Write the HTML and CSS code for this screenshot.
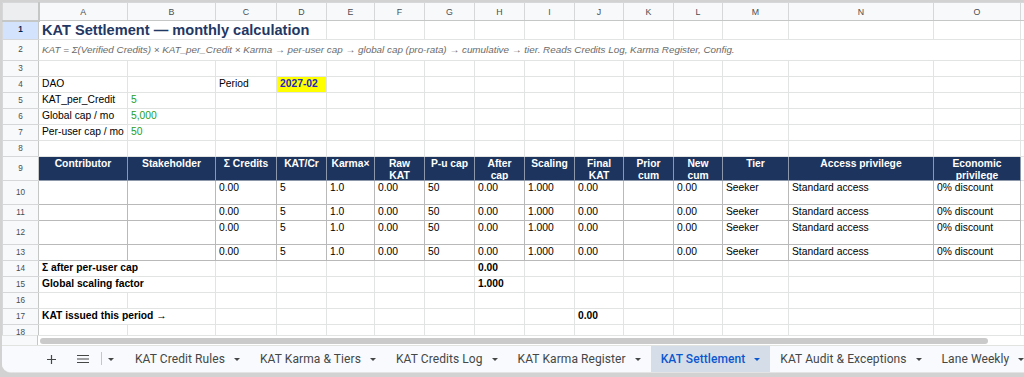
FILE: index.html
```html
<!DOCTYPE html>
<html>
<head>
<meta charset="utf-8">
<title>KAT Settlement</title>
<link rel="stylesheet" href="styles.css">
</head>
<body>
<div class="app">
  <div class="sheet">
    <table class="grid">
      <colgroup>
        <col class="c-rh"><col class="c-a"><col class="c-b"><col class="c-c"><col class="c-d"><col class="c-e"><col class="c-f"><col class="c-g"><col class="c-h"><col class="c-i"><col class="c-j"><col class="c-k"><col class="c-l"><col class="c-m"><col class="c-n"><col class="c-o"><col class="c-p">
      </colgroup>
      <tr class="r-colhdr">
        <th class="corner"></th><th>A</th><th>B</th><th>C</th><th>D</th><th>E</th><th>F</th><th>G</th><th>H</th><th>I</th><th>J</th><th>K</th><th>L</th><th>M</th><th>N</th><th>O</th><th></th>
      </tr>
      <tr class="r-1">
        <th class="rh rh-sel">1</th><td colspan="4" class="title">KAT Settlement — monthly calculation</td><td></td><td></td><td></td><td></td><td></td><td></td><td></td><td></td><td></td><td></td><td></td><td></td>
      </tr>
      <tr class="r-2">
        <th class="rh">2</th><td colspan="15" class="note">KAT = Σ(Verified Credits) × KAT_per_Credit × Karma → per-user cap → global cap (pro-rata) → cumulative → tier. Reads Credits Log, Karma Register, Config.</td><td></td>
      </tr>
      <tr class="r-s">
        <th class="rh">3</th><td></td><td></td><td></td><td></td><td></td><td></td><td></td><td></td><td></td><td></td><td></td><td></td><td></td><td></td><td></td><td></td>
      </tr>
      <tr class="r-s">
        <th class="rh">4</th><td>DAO</td><td></td><td>Period</td><td class="period">2027-02</td><td></td><td></td><td></td><td></td><td></td><td></td><td></td><td></td><td></td><td></td><td></td><td></td>
      </tr>
      <tr class="r-s">
        <th class="rh">5</th><td>KAT_per_Credit</td><td class="input">5</td><td></td><td></td><td></td><td></td><td></td><td></td><td></td><td></td><td></td><td></td><td></td><td></td><td></td><td></td>
      </tr>
      <tr class="r-s">
        <th class="rh">6</th><td>Global cap / mo</td><td class="input">5,000</td><td></td><td></td><td></td><td></td><td></td><td></td><td></td><td></td><td></td><td></td><td></td><td></td><td></td><td></td>
      </tr>
      <tr class="r-s">
        <th class="rh">7</th><td>Per-user cap / mo</td><td class="input">50</td><td></td><td></td><td></td><td></td><td></td><td></td><td></td><td></td><td></td><td></td><td></td><td></td><td></td><td></td>
      </tr>
      <tr class="r-s">
        <th class="rh">8</th><td></td><td></td><td></td><td></td><td></td><td></td><td></td><td></td><td></td><td></td><td></td><td></td><td></td><td></td><td></td><td></td>
      </tr>
      <tr class="r-l">
        <th class="rh">9</th>
        <td class="th"><div class="hw">Contributor</div></td>
        <td class="th"><div class="hw">Stakeholder</div></td>
        <td class="th"><div class="hw">Σ Credits</div></td>
        <td class="th"><div class="hw">KAT/Cr</div></td>
        <td class="th"><div class="hw">Karma×</div></td>
        <td class="th"><div class="hw">Raw<br>KAT</div></td>
        <td class="th"><div class="hw">P-u cap</div></td>
        <td class="th"><div class="hw">After<br>cap</div></td>
        <td class="th"><div class="hw">Scaling</div></td>
        <td class="th"><div class="hw">Final<br>KAT</div></td>
        <td class="th"><div class="hw">Prior<br>cum</div></td>
        <td class="th"><div class="hw">New<br>cum</div></td>
        <td class="th"><div class="hw">Tier</div></td>
        <td class="th"><div class="hw">Access privilege</div></td>
        <td class="th"><div class="hw">Economic<br>privilege</div></td>
        <td></td>
      </tr>
      <tr class="r-l">
        <th class="rh">10</th><td class="d"></td><td class="d"></td><td class="d">0.00</td><td class="d">5</td><td class="d">1.0</td><td class="d">0.00</td><td class="d">50</td><td class="d">0.00</td><td class="d">1.000</td><td class="d">0.00</td><td class="d"></td><td class="d">0.00</td><td class="d">Seeker</td><td class="d">Standard access</td><td class="d">0% discount</td><td></td>
      </tr>
      <tr class="r-s">
        <th class="rh">11</th><td class="d"></td><td class="d"></td><td class="d">0.00</td><td class="d">5</td><td class="d">1.0</td><td class="d">0.00</td><td class="d">50</td><td class="d">0.00</td><td class="d">1.000</td><td class="d">0.00</td><td class="d"></td><td class="d">0.00</td><td class="d">Seeker</td><td class="d">Standard access</td><td class="d">0% discount</td><td></td>
      </tr>
      <tr class="r-l">
        <th class="rh">12</th><td class="d"></td><td class="d"></td><td class="d">0.00</td><td class="d">5</td><td class="d">1.0</td><td class="d">0.00</td><td class="d">50</td><td class="d">0.00</td><td class="d">1.000</td><td class="d">0.00</td><td class="d"></td><td class="d">0.00</td><td class="d">Seeker</td><td class="d">Standard access</td><td class="d">0% discount</td><td></td>
      </tr>
      <tr class="r-s">
        <th class="rh">13</th><td class="d"></td><td class="d"></td><td class="d">0.00</td><td class="d">5</td><td class="d">1.0</td><td class="d">0.00</td><td class="d">50</td><td class="d">0.00</td><td class="d">1.000</td><td class="d">0.00</td><td class="d"></td><td class="d">0.00</td><td class="d">Seeker</td><td class="d">Standard access</td><td class="d">0% discount</td><td></td>
      </tr>
      <tr class="r-s">
        <th class="rh">14</th><td colspan="2" class="b">Σ after per-user cap</td><td></td><td></td><td></td><td></td><td></td><td class="b">0.00</td><td></td><td></td><td></td><td></td><td></td><td></td><td></td><td></td>
      </tr>
      <tr class="r-s">
        <th class="rh">15</th><td colspan="2" class="b">Global scaling factor</td><td></td><td></td><td></td><td></td><td></td><td class="b">1.000</td><td></td><td></td><td></td><td></td><td></td><td></td><td></td><td></td>
      </tr>
      <tr class="r-s">
        <th class="rh">16</th><td></td><td></td><td></td><td></td><td></td><td></td><td></td><td></td><td></td><td></td><td></td><td></td><td></td><td></td><td></td><td></td>
      </tr>
      <tr class="r-s">
        <th class="rh">17</th><td colspan="2" class="b">KAT issued this period →</td><td></td><td></td><td></td><td></td><td></td><td></td><td></td><td class="b">0.00</td><td></td><td></td><td></td><td></td><td></td><td></td>
      </tr>
      <tr class="r-s">
        <th class="rh">18</th><td></td><td></td><td></td><td></td><td></td><td></td><td></td><td></td><td></td><td></td><td></td><td></td><td></td><td></td><td></td><td></td>
      </tr>
    </table>
  </div>
  <div class="hscroll">
    <div class="hs-corner"></div>
    <div class="hs-track"><div class="hs-thumb"></div></div>
  </div>
  <div class="tabs">
    <div class="tb-btn">
      <svg width="11" height="11" viewBox="0 0 11 11"><path d="M5.5 1v9M1 5.5h9" stroke="#444746" stroke-width="1.2" fill="none"/></svg>
    </div>
    <div class="tb-btn">
      <svg width="12" height="10" viewBox="0 0 12 10"><path d="M0 1.5h12M0 5h12M0 8.5h12" stroke="#444746" stroke-width="1.2" fill="none"/></svg>
    </div>
    <div class="tb-sep"></div>
    <div class="tb-drop"><span class="caret"></span></div>
    <div class="tab"><span>KAT Credit Rules</span><span class="caret"></span></div>
    <div class="tab"><span>KAT Karma &amp; Tiers</span><span class="caret"></span></div>
    <div class="tab"><span>KAT Credits Log</span><span class="caret"></span></div>
    <div class="tab"><span>KAT Karma Register</span><span class="caret"></span></div>
    <div class="tab active"><span>KAT Settlement</span><span class="caret"></span></div>
    <div class="tab"><span>KAT Audit &amp; Exceptions</span><span class="caret"></span></div>
    <div class="tab"><span>Lane Weekly</span><span class="caret"></span></div>
  </div>
</div>
</body>
</html>
```
FILE: styles.css
```css
* { box-sizing: border-box; }
html, body { margin: 0; padding: 0; }
body {
  background: #d2d2d2;
  font-family: "Liberation Sans", Arial, sans-serif;
  width: 1024px;
  height: 377px;
  overflow: hidden;
}
.app {
  margin: 2px 0 0 2px;
  height: 371px;
  background: #ffffff;
  border-bottom-left-radius: 9px;
  overflow: hidden;
  display: flex;
  flex-direction: column;
  border-bottom: 1px solid #e4e4e4;
}
.sheet {
  height: 333px;
  overflow: hidden;
  flex: none;
}
.grid {
  border-collapse: collapse;
  table-layout: fixed;
  width: 1118px;
}
.c-rh { width: 36px; }
.c-a { width: 89px; }
.c-b { width: 88px; }
.c-c { width: 61px; }
.c-d { width: 50px; }
.c-e { width: 48px; }
.c-f, .c-g, .c-h, .c-i, .c-k { width: 50px; }
.c-j, .c-l { width: 49px; }
.c-m { width: 66px; }
.c-n { width: 145px; }
.c-o { width: 87px; }
.c-p { width: 100px; }

.grid td {
  border: 1px solid #e2e3e3;
  padding: 0 3px;
  font-size: 10.3px;
  line-height: 14px;
  white-space: nowrap;
  overflow: hidden;
  vertical-align: top;
  color: #000;
}
.grid th {
  background: #f8f9fa;
  border: 1px solid #d5d7d9;
  color: #4a4d50;
  font-weight: normal;
  padding: 0;
  text-align: center;
  overflow: hidden;
}
.r-colhdr { height: 18px; }
.r-colhdr th {
  font-size: 8.8px;
  line-height: 16px;
  border-bottom-color: #c4c7c5;
}
.r-colhdr th.corner {
  background: #eceef0;
  border-right: 2px solid #c4c7c5;
  border-bottom: 2px solid #c4c7c5;
}
.rh {
  font-size: 8.2px;
  line-height: 14px;
  border-right-color: #c4c7c5 !important;
  vertical-align: middle;
}
.rh-sel {
  background: #d3e3fd !important;
  color: #0b1f4d !important;
  font-weight: bold !important;
}
.r-1 { height: 19px; }
.r-2 { height: 21px; }
.r-s { height: 16px; }
.r-l { height: 24px; }

.grid td.title {
  font-size: 14.6px;
  font-weight: bold;
  color: #1f3864;
  line-height: 18px;
  vertical-align: middle;
}
.grid td.note {
  font-size: 9.85px;
  font-style: italic;
  color: #6b6b6b;
  line-height: 18px;
  vertical-align: middle;
}
.grid td.period {
  background: #ffff00;
  color: #2424cc;
  font-weight: bold;
}
.grid td.input { color: #23a023; }
.grid td.b { font-weight: bold; }

.grid td.th {
  background: #1d355e;
  color: #ffffff;
  font-weight: bold;
  text-align: center;
  border: 1px solid #8d99ab;
  padding: 1px 2px 0;
  line-height: 12px;
}
.hw {
  height: 22px;
  overflow: hidden;
}
.grid td.d {
  border: 1px solid #b9b9b9;
}

.hscroll {
  height: 10px;
  display: flex;
  flex: none;
}
.hs-corner {
  width: 36px;
  background: #f8f9fa;
  border-right: 1px solid #c4c7c5;
  border-top: 1px solid #e2e3e3;
}
.hs-track {
  flex: 1;
  padding: 2px 0 0 2px;
  border-top: 1px solid #e2e3e3;
}
.hs-thumb {
  width: 948px;
  height: 6px;
  border-radius: 3px;
  background: #cacaca;
}

.tabs {
  flex: 1;
  display: flex;
  align-items: stretch;
  background: #f8fafd;
  border-top: 1px solid #e1e3e1;
  padding-left: 35px;
  font-family: Roboto, "Liberation Sans", sans-serif;
  font-size: 12px;
  letter-spacing: 0.08px;
  color: #444746;
  white-space: nowrap;
  overflow: hidden;
}
.tabs > * { flex: none; }
.tb-btn {
  width: 28px;
  display: flex;
  align-items: center;
  justify-content: center;
  margin-right: 4px;
}
.tb-sep {
  width: 1px;
  background: #c4c7c5;
  margin: 6px 0 7px;
}
.tb-drop {
  width: 17px;
  display: flex;
  align-items: center;
  justify-content: center;
  margin-right: 6px;
}
.tab {
  display: flex;
  align-items: center;
  padding: 0 10px;
}
.tab .caret { margin-left: 9px; }
.caret {
  display: inline-block;
  width: 0;
  height: 0;
  border-left: 3px solid transparent;
  border-right: 3px solid transparent;
  border-top: 3px solid #444746;
}
.tab.active {
  background: #d5dee8;
  color: #0b57d0;
  font-weight: 500;
}
.tab.active .caret { border-top-color: #0b57d0; }
```
